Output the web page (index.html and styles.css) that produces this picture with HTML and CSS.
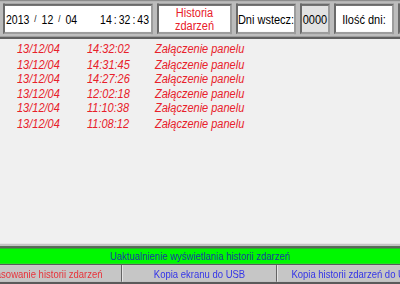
FILE: index.html
```html
<!DOCTYPE html>
<html lang="pl">
<head>
    <meta charset="UTF-8">
    <meta name="viewport" content="width=device-width, initial-scale=1.0">
    <title>Historia zdarzeń</title>
    <link rel="stylesheet" href="styles.css">
</head>
<body>

    <div class="screen">

        <div class="topbar">
            <div class="field clock">
                <div class="date">
                    <span>2013</span><span class="sep">/</span><span>12</span><span class="sep">/</span><span>04</span>
                </div>
                <div class="time">
                    <span>14</span><span class="colon">:</span><span>32</span><span class="colon">:</span><span>43</span>
                </div>
            </div>
            <div class="field title">Historia<br>zdarzeń</div>
            <div class="field label">Dni wstecz:</div>
            <div class="field value">0000</div>
            <div class="field label">Ilość dni:</div>
            <div class="field label"></div>
        </div>

        <div class="log" id="log"></div>

        <div class="refresh">Uaktualnienie wyświetlania historii zdarzeń</div>

        <div class="actions">
            <button class="action delete">Kasowanie historii zdarzeń</button>
            <button class="action">Kopia ekranu do USB</button>
            <button class="action">Kopia historii zdarzeń do USB</button>
        </div>

    </div>

    <script>
        const log = document.getElementById("log");

        const events = [
            { date: "13/12/04", time: "14:32:02", text: "Załączenie panelu" },
            { date: "13/12/04", time: "14:31:45", text: "Załączenie panelu" },
            { date: "13/12/04", time: "14:27:26", text: "Załączenie panelu" },
            { date: "13/12/04", time: "12:02:18", text: "Załączenie panelu" },
            { date: "13/12/04", time: "11:10:38", text: "Załączenie panelu" },
            { date: "13/12/04", time: "11:08:12", text: "Załączenie panelu" }
        ];

        events.forEach(ev => {
            const row = document.createElement("div");
            row.classList.add("log-row");
            row.innerHTML = `<span>${ev.date}</span><span>${ev.time}</span><span>${ev.text}</span>`;
            log.appendChild(row);
        });
    </script>

</body>
</html>
```

FILE: styles.css
```css
html, body {
    height: 284px;
}

body {
    margin: 0;
    padding: 0;
    overflow: hidden;
    background-color: #f0f0f0;
    font-family: "Liberation Sans", Arial, sans-serif;
}

.screen {
    width: 400px;
    height: 240px;
    display: flex;
    flex-direction: column;
    overflow: hidden;
    transform: scaleY(1.1833);
    transform-origin: top left;
}

.topbar {
    display: flex;
    gap: 4px;
    padding: 2px 0 2px 3px;
    background: #bcbcbc;
    border-top: 1px solid #8c8c8c;
    border-bottom: 2px solid #606060;
    overflow: hidden;
}

.field {
    flex: none;
    height: 22px;
    background: white;
    border: 2px solid;
    border-color: #6a6a6a #9c9c9c #9c9c9c #6a6a6a;
    display: flex;
    align-items: center;
    justify-content: center;
    font-size: 11px;
    color: black;
    white-space: nowrap;
}

.clock {
    justify-content: space-between;
    padding: 0 2px 0 1px;
    width: 143px;
    font-size: 10.5px;
}

.date, .time {
    display: flex;
    align-items: center;
}

.sep {
    font-size: 8px;
    margin: 0 5px;
}

.colon {
    margin: 0 2px;
}

.title {
    width: 71px;
    color: #e8202a;
    text-align: center;
    line-height: 11px;
}

.label {
    width: 56px;
}

.value {
    width: 26px;
    background: #e2e2e2;
}

.log {
    flex: 1;
    padding: 2px 0 0 17px;
    background: #f0f0f0;
    border-bottom: 2px solid #c4c4c4;
}

.log-row {
    display: grid;
    grid-template-columns: 70px 68px auto;
    height: 12.5px;
    line-height: 12.5px;
    font-size: 11px;
    font-style: italic;
    color: #e8202a;
}

.refresh {
    flex: none;
    height: 13px;
    line-height: 13px;
    background: #00f800;
    border-top: 2px solid #5e5e5e;
    text-align: center;
    font-size: 9.5px;
    color: #1a3c9c;
}

.actions {
    flex: none;
    display: flex;
    margin-left: -30px;
    border-top: 1px solid #5a5a5a;
    border-bottom: 2px solid #5a5a5a;
}

.action {
    flex: none;
    width: 155px;
    height: 14px;
    padding: 0;
    margin: 0;
    background: #c6c6c6;
    border: none;
    border-left: 1px solid #e4e4e4;
    border-right: 1px solid #646464;
    font-family: "Liberation Sans", Arial, sans-serif;
    font-size: 9.5px;
    color: #3434e8;
    white-space: nowrap;
    overflow: hidden;
}

.action.delete {
    width: 152px;
    color: #e8323a;
}
```
